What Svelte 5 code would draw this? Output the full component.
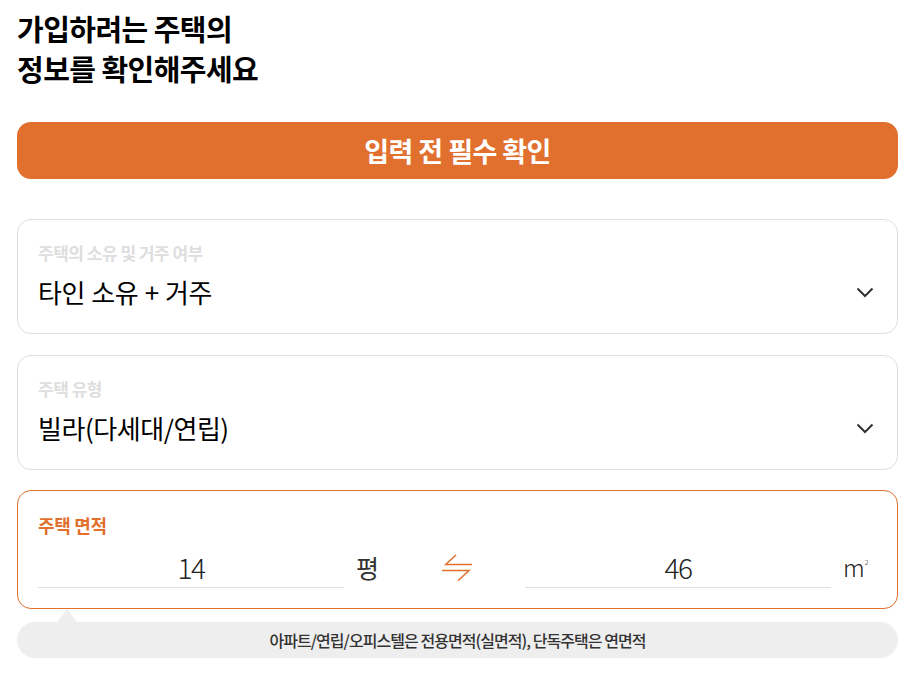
<script lang="ts">
  const selects = [
    { label: "주택의 소유 및 거주 여부", value: "타인 소유 + 거주" },
    { label: "주택 유형", value: "빌라(다세대/연립)" },
  ];
</script>

<div class="page">
  <h1>가입하려는 주택의<br />정보를 확인해주세요</h1>

  <button type="button" class="notice">입력 전 필수 확인</button>

  {#each selects as s}
    <div class="card">
      <div class="label">{s.label}</div>
      <div class="row">
        <span class="value">{s.value}</span>
        <svg class="chev" width="18" height="11" viewBox="0 0 18 11" fill="none">
          <path d="M1.5 1.5 L9 9 L16.5 1.5" stroke="#333" stroke-width="2" />
        </svg>
      </div>
    </div>
  {/each}

  <div class="card active">
    <div class="label">주택 면적</div>
    <div class="area">
      <div class="num">14</div>
      <span class="unit">평</span>
      <svg class="swap" width="32" height="28" viewBox="0 0 32 28" fill="none">
        <path d="M15 2 L4.7 11.5 H31 M1 17.5 H28 L17 27.7" stroke="#e1702e" stroke-width="1.5" />
      </svg>
      <div class="num">46</div>
      <span class="unit m">m<sup>2</sup></span>
    </div>
  </div>

  <div class="tip">아파트/연립/오피스텔은 전용면적(실면적), 단독주택은 연면적</div>
</div>

<style>
  :global(body) {
    background: #fff;
  }
  .page {
    box-sizing: border-box;
    width: 906px;
    padding: 8px 8px 0 17px;
    font-family: "Noto Sans CJK KR", "Noto Sans", sans-serif;
    color: #000;
  }
  h1 {
    margin: 0;
    font-size: 29px;
    line-height: 40px;
    font-weight: 700;
    letter-spacing: -0.55px;
  }
  .notice {
    display: block;
    width: 100%;
    height: 57px;
    margin: 34px 0 40px;
    border: none;
    border-radius: 14px;
    background: #e1702e;
    color: #fff;
    font-family: inherit;
    font-size: 27px;
    font-weight: 700;
    letter-spacing: -0.6px;
  }
  .card {
    box-sizing: border-box;
    height: 115px;
    margin-bottom: 21px;
    padding: 20px 20px 0;
    border: 1px solid #dedede;
    border-radius: 14px;
  }
  .label {
    font-size: 17px;
    line-height: 26px;
    font-weight: 700;
    letter-spacing: -0.5px;
    color: #dedede;
  }
  .row {
    display: flex;
    align-items: center;
    justify-content: space-between;
    margin-top: 7px;
  }
  .value {
    font-size: 26px;
    font-weight: 400;
    line-height: 38px;
    letter-spacing: -0.45px;
    word-spacing: 1px;
  }
  .chev {
    margin-right: 3px;
  }
  .active {
    height: 119px;
    margin-bottom: 13px;
    margin-top: -1px;
    border-color: #e1702e;
    padding-top: 21px;
  }
  .active .label {
    font-size: 18px;
    letter-spacing: -0.3px;
    color: #e1702e;
  }
  .area {
    display: flex;
    align-items: flex-start;
    margin-top: 11px;
  }
  .num {
    flex: none;
    box-sizing: border-box;
    width: 306px;
    height: 39px;
    border-bottom: 1px solid #dedede;
    text-align: center;
    font-size: 28px;
    line-height: 36px;
    font-weight: 300;
    letter-spacing: -1.5px;
    color: #222;
  }
  .unit {
    flex: none;
    margin-left: 12px;
    width: 44px;
    font-size: 25px;
    line-height: 36px;
    letter-spacing: -1px;
    color: #333;
  }
  .unit.m {
    width: 34px;
    font-size: 24px;
    font-weight: 300;
    letter-spacing: 0;
    color: #222;
  }
  .unit sup {
    font-size: 7px;
    vertical-align: 12px;
    line-height: 0;
  }
  .swap {
    flex: none;
    margin: 4px 52px 0 41px;
  }
  .tip {
    position: relative;
    height: 36px;
    border-radius: 18px;
    background: #eee;
    text-align: center;
    font-size: 16px;
    font-weight: 500;
    line-height: 36px;
    letter-spacing: -0.95px;
    color: #333;
  }
  .tip::before {
    content: "";
    position: absolute;
    left: 40px;
    top: -13px;
    border-left: 10px solid transparent;
    border-right: 10px solid transparent;
    border-bottom: 13px solid #eee;
  }
</style>
